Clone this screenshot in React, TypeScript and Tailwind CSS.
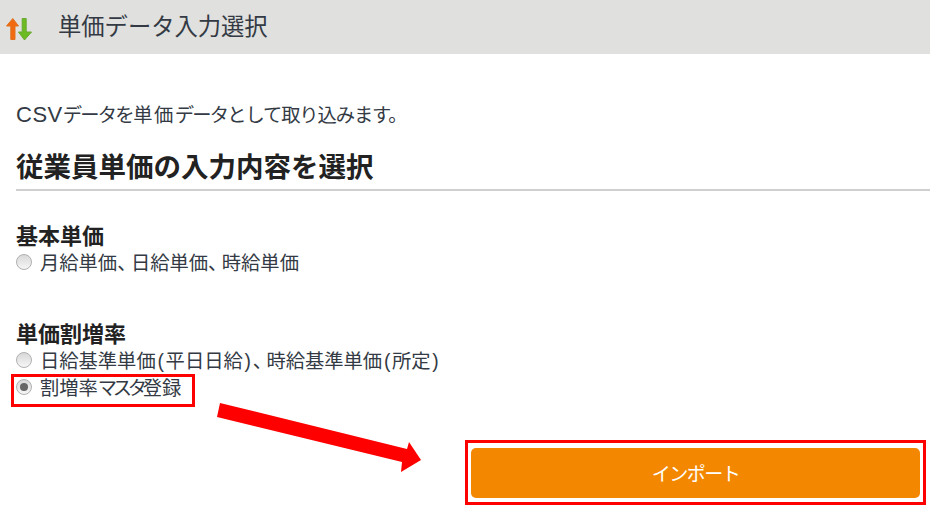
const jp = "font-['Liberation_Sans','Noto_Sans_CJK_JP',sans-serif]";

function SortIcon() {
  return (
    <svg width="36" height="54" viewBox="0 0 36 54" className="shrink-0">
      <path d="M12.8 18.5 L18.5 26 H15 V39.5 H10.8 V26 H6.5 Z" fill="#f26a0f" stroke="#e0721f" strokeWidth="1" strokeLinejoin="round" />
      <path d="M22.2 18.5 H26.2 V32 H31.5 L24.5 40 L18.5 32 H22.2 Z" fill="#6cbb22" stroke="#6aa832" strokeWidth="1" strokeLinejoin="round" />
    </svg>
  );
}

function Comma() {
  return <span className="tracking-[-5.5px]">、</span>;
}

function Paren({ children }: { children: React.ReactNode }) {
  return <span className="px-[1.75px]">{children}</span>;
}

function Radio({ checked, children }: { checked?: boolean; children: React.ReactNode }) {
  return (
    <label className="flex h-[27px] items-center">
      <span className="mb-[3px] flex h-[16px] w-[16px] items-center justify-center rounded-full border border-[#b0b0b0] bg-gradient-to-b from-[#d8d8d8] to-[#f6f6f6]">
        {checked && <span className="h-[8px] w-[8px] rounded-full bg-[#666666]" />}
      </span>
      <span className="ml-[8px] text-[19.3px] leading-[27px] text-[#333a44]">{children}</span>
    </label>
  );
}

export default function App() {
  return (
    <div className={`relative h-[508px] w-[930px] overflow-hidden bg-white ${jp}`}>
      <header className="flex h-[54px] items-center bg-[#e0e0de]">
        <SortIcon />
        <h1 className="ml-[22px] text-[23.3px] font-normal text-[#333a44]">単価データ入力選択</h1>
      </header>

      <div className="pl-[16px]">
        <p className="mt-[48px] text-[19.3px] leading-[26px] text-[#333a44]">
          <span className="text-[22px] tracking-[0.5px]">CSV</span>
          <span className="tracking-[-1.8px]">データ</span>
          <span className="tracking-[-1.3px]">を</span>
          <span className="tracking-[1.5px]">単価</span>
          <span className="tracking-[-1.8px]">データ</span>
          <span className="tracking-[-1.1px]">として取り込みます。</span>
        </p>
        <h2 className="mt-[21px] border-b-2 border-[#cfcfcf] pb-[3px] text-[27.5px] font-bold leading-[36px] text-[#222222]">従業員単価の入力内容を選択</h2>

        <h3 className="mt-[33px] text-[22px] font-bold leading-[26px] text-[#222222]">基本単価</h3>
        <div>
          <Radio>月給単価<Comma />日給単価<Comma />時給単価</Radio>
        </div>

        <h3 className="mt-[45px] text-[22px] font-bold leading-[26px] text-[#222222]">単価割増率</h3>
        <div>
          <Radio>日給基準単価<Paren>(</Paren>平日日給<Paren>)</Paren><Comma />時給基準単価<Paren>(</Paren>所定<Paren>)</Paren></Radio>
          <Radio checked>割増率<span className="tracking-[-4.3px]">マスタ</span>登録</Radio>
        </div>
      </div>

      <div className="absolute left-[11px] top-[374px] h-[33px] w-[184px] border-[3px] border-[#ff0000]" />

      <svg className="absolute left-[210px] top-[395px]" width="215" height="85" viewBox="0 0 215 85">
        <path d="M10 8 L197 54 L199 47 L211 65 L191 77 L192 67 L7 22 Z" fill="#ff0000" />
      </svg>

      <div className="absolute left-[465px] top-[440px] flex h-[65px] w-[461px] items-center justify-center border-[3px] border-[#ff0000] bg-white">
        <button className="h-[50px] w-[449px] rounded-[5px] bg-[#f38800] pt-[5px] text-[19px] tracking-[-1.5px] text-white">インポート</button>
      </div>
    </div>
  );
}
